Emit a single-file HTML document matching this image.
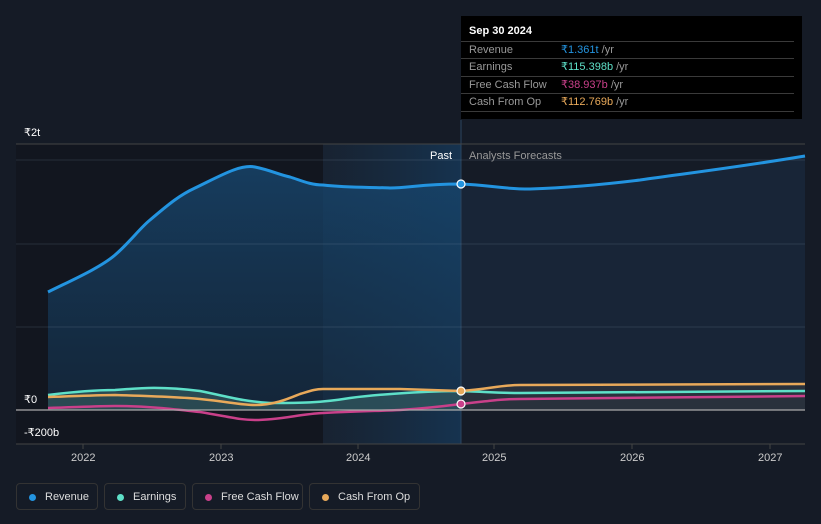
<!DOCTYPE html><html><head><style>
body{margin:0;background:#151b26;width:821px;height:524px;overflow:hidden;font-family:"Liberation Sans",sans-serif;position:relative}
.t{position:absolute;font-size:11px;color:#fff}
.tip{position:absolute;left:461px;top:16px;width:341px;height:103px;background:#000;}
.tip .h{position:absolute;left:8px;top:9px;font-size:11px;color:#fff;font-weight:bold}
.row{position:absolute;left:0;width:333px;border-top:1px solid #3a3a3a;font-size:11px;color:#999;height:17px;line-height:17px}
.row span.l{position:absolute;left:8px}.row span.v{position:absolute;left:100px}
.leg{position:absolute;top:483px;height:27px;border:1px solid #333;border-radius:4px;font-size:11px;color:#ddd;line-height:27px;box-sizing:border-box;padding-left:28px}
.leg i{position:absolute;left:12px;top:10px;width:7px;height:7px;border-radius:50%}
</style></head><body>
<svg width="821" height="524" style="position:absolute;left:0;top:0">
<defs><linearGradient id="hl" x1="0" x2="1"><stop offset="0" stop-color="#1a2a3d" stop-opacity=".5"/><stop offset="1" stop-color="#16395a" stop-opacity=".8"/></linearGradient>
<linearGradient id="rf" x1="0" y1="0" x2="0" y2="1"><stop offset="0" stop-color="#17466e" stop-opacity=".8"/><stop offset="1" stop-color="#15304a" stop-opacity=".6"/></linearGradient></defs>
<rect x="16" y="144" width="307" height="300" fill="#12161f"/>
<rect x="323" y="144" width="138" height="300" fill="url(#hl)"/>
<path d="M48,292 C70,281 100,268 115,255 C130,242 140,228 150,220 C170,203 180,195 195,188 C220,176 240,164 255,167 C270,170 280,175 290,177 C300,180 310,185 323,185 C350,188 370,187 390,188 C410,188 420,184 461,184 L461,410 L48,410Z" fill="url(#rf)"/>
<path d="M461,184 C490,185 500,189 530,189 C560,188 600,185 640,180 C680,174 720,170 805,156 L805,410 L461,410Z" fill="#1a2a3d" fill-opacity=".75"/>
<path d="M461,391 C490,389 500,385 520,385 L805,384 L805,410 L461,410Z" fill="#2e343d" fill-opacity=".8"/>
<path d="M48,395 C80,391 100,390 115,390 C140,388 160,386 200,391 C230,397 240,401 270,403 C300,403 320,403 350,398 C380,394 430,391 461,391 L461,410 L48,410Z" fill="#3d6b6a" fill-opacity=".5"/>
<line x1="461" y1="120" x2="461" y2="444" stroke="#2a4560"/>
<g stroke="#8aa0b8" stroke-opacity=".18"><line x1="16" y1="160" x2="805" y2="160"/><line x1="16" y1="244" x2="805" y2="244"/><line x1="16" y1="327" x2="805" y2="327"/></g>
<g stroke="#444"><line x1="16" y1="144" x2="805" y2="144"/><line x1="16" y1="444" x2="805" y2="444"/></g>
<path d="M48,292 C70,281 100,268 115,255 C130,242 140,228 150,220 C170,203 180,195 195,188 C220,176 240,164 255,167 C270,170 280,175 290,177 C300,180 310,185 323,185 C350,188 370,187 390,188 C410,188 420,184 461,184 C490,185 500,189 530,189 C560,188 600,185 640,180 C680,174 720,170 805,156" fill="none" stroke="#2394e0" stroke-width="3"/>
<path d="M48,395 C80,391 100,390 115,390 C140,388 160,386 200,391 C230,397 240,401 270,403 C300,403 320,403 350,398 C380,394 430,391 461,391 C490,392 500,393 520,393 L805,391" fill="none" stroke="#5ee0c8" stroke-width="2.5"/>
<path d="M48,397 C80,396 100,395 115,395 C150,396 180,397 200,399 C230,402 240,405 255,405 C275,405 290,398 300,394 C310,391 315,389 323,389 L400,389 L461,391 C490,389 500,385 520,385 L805,384" fill="none" stroke="#e8a95a" stroke-width="2.5"/>
<path d="M48,408 C80,407 100,406 115,406 C150,406 180,410 200,412 C230,417 240,420 255,420 C280,420 300,414 323,413 C360,411 380,411 400,410 C430,408 445,406 461,404 C490,401 500,399 520,399 L805,396" fill="none" stroke="#c9408a" stroke-width="2.5"/>
<line x1="16" y1="410" x2="805" y2="410" stroke="#aaa" stroke-width="1.2"/>
<circle cx="461" cy="184" r="4" fill="#2394e0" stroke="#fff" stroke-width="1.2"/>
<circle cx="461" cy="391" r="4" fill="#e8a95a" stroke="#fff" stroke-width="1.2"/>
<circle cx="461" cy="404" r="4" fill="#c9408a" stroke="#fff" stroke-width="1.2"/>
<g stroke="#444"><line x1="83" y1="444" x2="83" y2="449"/><line x1="221" y1="444" x2="221" y2="449"/><line x1="358" y1="444" x2="358" y2="449"/><line x1="494" y1="444" x2="494" y2="449"/><line x1="632" y1="444" x2="632" y2="449"/><line x1="770" y1="444" x2="770" y2="449"/></g>
</svg>
<div class="t" style="left:24px;top:126px">₹2t</div>
<div class="t" style="left:24px;top:393px">₹0</div>
<div class="t" style="left:24px;top:426px">-₹200b</div>
<div class="t" style="left:430px;top:150px">Past</div>
<div class="t" style="left:469px;top:150px;color:#999">Analysts Forecasts</div>
<div class="t" style="left:71px;top:452px;color:#ccc">2022</div>
<div class="t" style="left:209px;top:452px;color:#ccc">2023</div>
<div class="t" style="left:346px;top:452px;color:#ccc">2024</div>
<div class="t" style="left:482px;top:452px;color:#ccc">2025</div>
<div class="t" style="left:620px;top:452px;color:#ccc">2026</div>
<div class="t" style="left:758px;top:452px;color:#ccc">2027</div>
<div class="tip"><div class="h">Sep 30 2024</div>
<div class="row" style="top:25px"><span class="l">Revenue</span><span class="v"><b style="font-weight:normal;color:#2394e0">₹1.361t</b> /yr</span></div>
<div class="row" style="top:42px"><span class="l">Earnings</span><span class="v"><b style="font-weight:normal;color:#5ee0c8">₹115.398b</b> /yr</span></div>
<div class="row" style="top:60px"><span class="l">Free Cash Flow</span><span class="v"><b style="font-weight:normal;color:#c9408a">₹38.937b</b> /yr</span></div>
<div class="row" style="top:77px"><span class="l">Cash From Op</span><span class="v"><b style="font-weight:normal;color:#e8a95a">₹112.769b</b> /yr</span></div>
<div class="row" style="top:95px;height:0"></div></div>
<div class="leg" style="left:16px;width:82px"><i style="background:#2394e0"></i>Revenue</div>
<div class="leg" style="left:104px;width:82px"><i style="background:#5ee0c8"></i>Earnings</div>
<div class="leg" style="left:192px;width:111px"><i style="background:#c9408a"></i>Free Cash Flow</div>
<div class="leg" style="left:309px;width:111px"><i style="background:#e8a95a"></i>Cash From Op</div>
</body></html>
